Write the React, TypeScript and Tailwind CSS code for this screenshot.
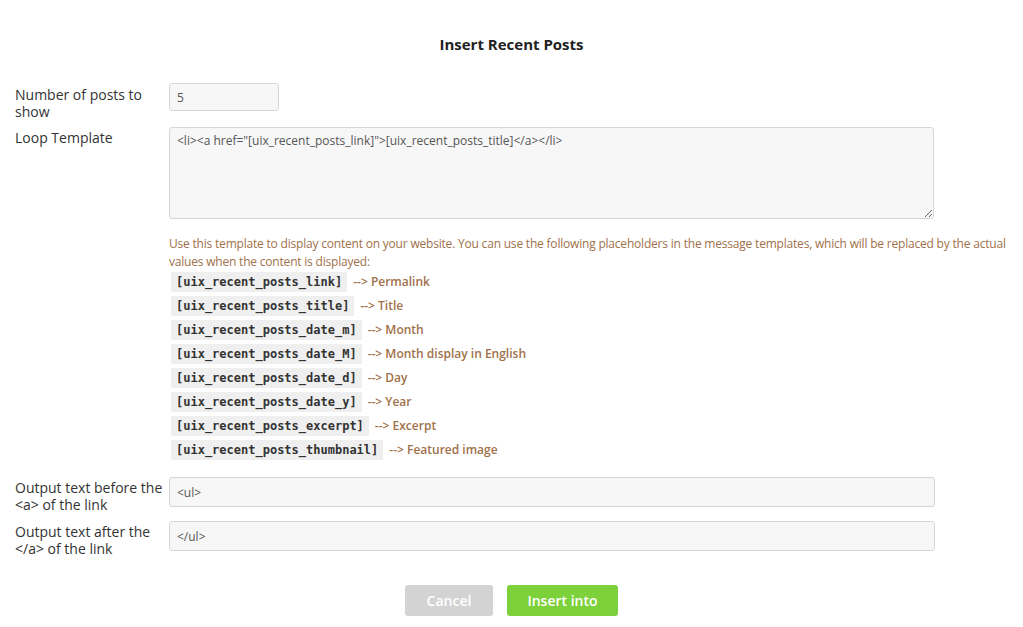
import React from 'react';

const placeholders: [string, string][] = [
  ['[uix_recent_posts_link]', 'Permalink'],
  ['[uix_recent_posts_title]', 'Title'],
  ['[uix_recent_posts_date_m]', 'Month'],
  ['[uix_recent_posts_date_M]', 'Month display in English'],
  ['[uix_recent_posts_date_d]', 'Day'],
  ['[uix_recent_posts_date_y]', 'Year'],
  ['[uix_recent_posts_excerpt]', 'Excerpt'],
  ['[uix_recent_posts_thumbnail]', 'Featured image'],
];

const inputCls =
  'block bg-[#f7f7f7] border border-[#d6d6d6] rounded-[3px] px-[7px] text-[12px] text-[#555] outline-none';

export default function App() {
  return (
    <div className="min-h-[627px] bg-white font-['Open_Sans',sans-serif] text-[#333]">
      <h1 className="pt-[34px] text-center text-[15px] font-bold leading-[20px] text-[#222]">Insert Recent Posts</h1>

      <div className="mt-[29px] pl-[15px] pr-[15px]">
        <div className="flex">
          <label className="w-[154px] shrink-0 pt-[3px] text-[14px] leading-[17px]">Number of posts to show</label>
          <input defaultValue="5" className={inputCls + ' w-[110px] h-[28px]'} />
        </div>

        <div className="mt-[7px] flex">
          <label className="w-[154px] shrink-0 pt-[2px] text-[14px] leading-[17px]">Loop Template</label>
          <div className="flex-1">
            <textarea
              defaultValue={'<li><a href="[uix_recent_posts_link]">[uix_recent_posts_title]</a></li>'}
              className={inputCls + ' w-[765px] h-[92px] py-[5px] leading-[16px] resize-y'}
            />
            <p className="mt-[16px] -mr-[10px] text-[12px] leading-[18px] tracking-[-0.2px] text-[#a0714b]">
              Use this template to display content on your website. You can use the following placeholders in the message templates, which will be replaced by the actual values when the content is displayed:
            </p>
            <ul className="mt-[1px] flex flex-col gap-[4px]">
              {placeholders.map(([code, desc]) => (
                <li key={code} className="flex items-center">
                  <code className="ml-[2px] bg-[#efefef] px-[5px] h-[20px] leading-[20px] font-['DejaVu_Sans_Mono',monospace] text-[12px] font-bold text-[#333]">
                    {code}
                  </code>
                  <span className="ml-[6px] text-[12px] font-semibold text-[#a0714b]">--&gt; {desc}</span>
                </li>
              ))}
            </ul>
          </div>
        </div>

        <div className="mt-[17px] flex">
          <label className="w-[154px] shrink-0 pt-[2px] text-[14px] leading-[17px]">Output text before the &lt;a&gt; of the link</label>
          <input defaultValue="<ul>" className={inputCls + ' w-[766px] h-[30px]'} />
        </div>

        <div className="mt-[8px] flex">
          <label className="w-[154px] shrink-0 pt-[2px] text-[14px] leading-[17px]">Output text after the &lt;/a&gt; of the link</label>
          <input defaultValue="</ul>" className={inputCls + ' w-[766px] h-[30px]'} />
        </div>

        <div className="mt-[28px] flex justify-center gap-[14px]">
          <button className="w-[88px] h-[31px] rounded-[3px] bg-[#d3d3d3] text-[14px] font-semibold text-white">Cancel</button>
          <button className="w-[111px] h-[31px] rounded-[3px] bg-[#7dd13a] text-[14px] font-semibold text-white">Insert into</button>
        </div>
      </div>
    </div>
  );
}
